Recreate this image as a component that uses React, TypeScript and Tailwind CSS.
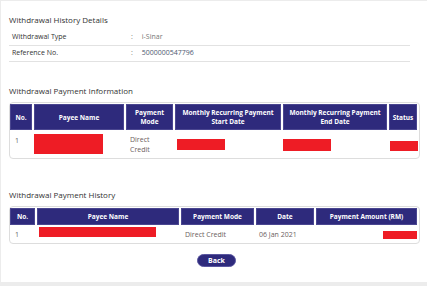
const Redacted = ({ className }: { className: string }) => (
    <div className={`bg-[#ee1c25] ${className}`}></div>
);

const Th = ({ children }: { children: React.ReactNode }) => (
    <div className="bg-[#2e2a7c] text-white font-bold text-[6.5px] leading-[9px] flex items-center justify-center text-center border border-[#4a4690]">
        {children}
    </div>
);

const App = () => {
    return (
        <div className="w-[427px] h-[286px] bg-[#ececec] pl-[1px] pt-[1px] overflow-hidden" style={{ fontFamily: '"Open Sans", sans-serif' }}>
            <div className="bg-white h-[281px] pl-[8px] pr-[7px]">
                <h2 className="text-[8px] text-[#333] pt-[13px] leading-[11px]">Withdrawal History Details</h2>

                <div className="mt-[4px] w-[401px] text-[7px] text-[#333]">
                    <div className="flex h-[17px] items-center border-b border-[#e2e2e2]">
                        <span className="w-[122px] pl-[3px]">Withdrawal Type</span>
                        <span className="text-[#777]">:</span>
                        <span className="ml-[9px] text-[#777]">i-Sinar</span>
                    </div>
                    <div className="flex h-[16px] items-center border-b border-[#e2e2e2]">
                        <span className="w-[122px] pl-[3px]">Reference No.</span>
                        <span className="text-[#777]">:</span>
                        <span className="ml-[9px] text-[#4e5870]">5000000547796</span>
                    </div>
                </div>

                <h2 className="text-[8px] text-[#333] mt-[23px] leading-[11px]">Withdrawal Payment Information</h2>

                <div className="mt-[6px] w-[411px] border border-[#ddd] rounded-[4px] pt-[1px]">
                    <div className="grid grid-cols-[22px_90px_47px_106px_104px_28px] gap-x-[2px]">
                        <div className="h-[26px] grid"><Th>No.</Th></div>
                        <Th>Payee Name</Th>
                        <Th>Payment<br />Mode</Th>
                        <Th>Monthly Recurring Payment<br />Start Date</Th>
                        <Th>Monthly Recurring Payment<br />End Date</Th>
                        <Th>Status</Th>
                        <div className="h-[28px] text-[7px] text-[#666] pl-[5px] pt-[6px]">1</div>
                        <div className="pt-[4px]"><Redacted className="w-[69px] h-[20px]" /></div>
                        <div className="text-[7px] leading-[10px] text-[#6b6060] pl-[4px] pt-[5px]">Direct<br />Credit</div>
                        <div className="pt-[9px] pl-[2px]"><Redacted className="w-[48px] h-[11px]" /></div>
                        <div className="pt-[9px]"><Redacted className="w-[48px] h-[12px]" /></div>
                        <div className="pt-[11px] pl-[1px]"><Redacted className="w-[28px] h-[10px]" /></div>
                    </div>
                </div>

                <h2 className="text-[8px] text-[#333] mt-[30px] leading-[11px]">Withdrawal Payment History</h2>

                <div className="mt-[6px] w-[411px] border border-[#ddd] rounded-[4px] pt-[1px]">
                    <div className="grid grid-cols-[25px_142px_73px_58px_101px] gap-x-[2px]">
                        <div className="h-[17px] grid"><Th>No.</Th></div>
                        <Th>Payee Name</Th>
                        <Th>Payment Mode</Th>
                        <Th>Date</Th>
                        <Th>Payment Amount (RM)</Th>
                        <div className="h-[18px] text-[7px] text-[#666] pl-[5px] pt-[5px]">1</div>
                        <div className="pt-[2px] pl-[2px]"><Redacted className="w-[117px] h-[10px]" /></div>
                        <div className="text-[7px] text-[#6b6060] pl-[4px] pt-[5px]">Direct Credit</div>
                        <div className="text-[7px] text-[#6b6060] pl-[3px] pt-[5px]">06 Jan 2021</div>
                        <div className="pt-[6px] flex justify-end"><Redacted className="w-[34px] h-[8px]" /></div>
                    </div>
                </div>

                <div className="flex justify-center mt-[10px]">
                    <button className="bg-[#2e2a7c] text-white font-bold text-[7px] w-[39px] h-[13px] rounded-full border border-[#5a56a0] leading-[11px] ml-[4px]">Back</button>
                </div>
            </div>
        </div>
    );
};

export default App;
